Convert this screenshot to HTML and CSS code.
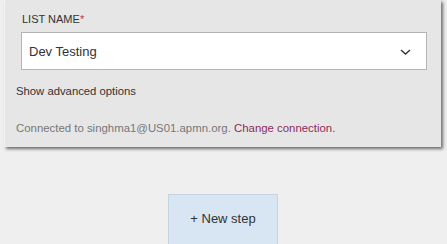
FILE: index.html
```html
<!DOCTYPE html>
<html>
<head>
<meta charset="utf-8">
<link rel="stylesheet" href="styles.css">
</head>
<body>
<div class="card">
  <div class="label">LIST NAME<span class="req">*</span></div>
  <div class="select">
    <span class="value">Dev Testing</span>
    <svg class="chev" width="11" height="6" viewBox="0 0 11 6"><path d="M1 1 L5.5 5 L10 1" fill="none" stroke="#333" stroke-width="1.4"/></svg>
  </div>
  <div class="advanced">Show advanced options</div>
  <div class="conn">Connected to singhma1@US01.apmn.org. <span class="link">Change connection.</span></div>
</div>
<div class="actions">
  <div class="newstep">+ New step</div>
</div>
</body>
</html>
```
FILE: styles.css
```css
html, body { margin: 0; padding: 0; }
body {
  background: #efefef;
  font-family: "Liberation Sans", Arial, sans-serif;
  width: 447px;
  height: 244px;
  overflow: hidden;
}
.card {
  margin-left: 4px;
  width: 437px;
  box-sizing: border-box;
  background: #e6e6e6;
  border-left: 1px solid #f4f4f4;
  padding: 13px 15px 13px 16px;
  box-shadow: 2px 2px 3px rgba(0,0,0,0.55);
  height: 147px;
}
.label {
  font-size: 11px;
  color: #333;
  line-height: 13px;
  margin-left: 1px;
}
.req { color: #c0305a; }
.select {
  margin-top: 6px;
  height: 38px;
  box-sizing: border-box;
  background: #fff;
  border: 1px solid #b4b4b4;
  display: flex;
  align-items: center;
  justify-content: space-between;
  padding: 0 15px 0 7px;
  width: 406px;
}
.value { font-size: 13px; color: #333; }
.chev { margin-top: 1px; }
.advanced {
  margin-top: 14px;
  font-size: 11.3px;
  color: #333;
  line-height: 14px;
  margin-left: -5px;
}
.conn {
  margin-top: 23px;
  font-size: 11.4px;
  color: #777;
  line-height: 14px;
  margin-left: -5px;
}
.link { color: #8a2c5c; }
.actions {
  display: flex;
  justify-content: center;
  padding-top: 47px;
  padding-right: 1px;
}
.newstep {
  width: 110px;
  height: 52px;
  box-sizing: border-box;
  background: #d8e5f3;
  border: 1px solid #c5d3e3;
  font-size: 13px;
  color: #333;
  display: flex;
  align-items: center;
  justify-content: center;
  padding-bottom: 3px;
}
```
